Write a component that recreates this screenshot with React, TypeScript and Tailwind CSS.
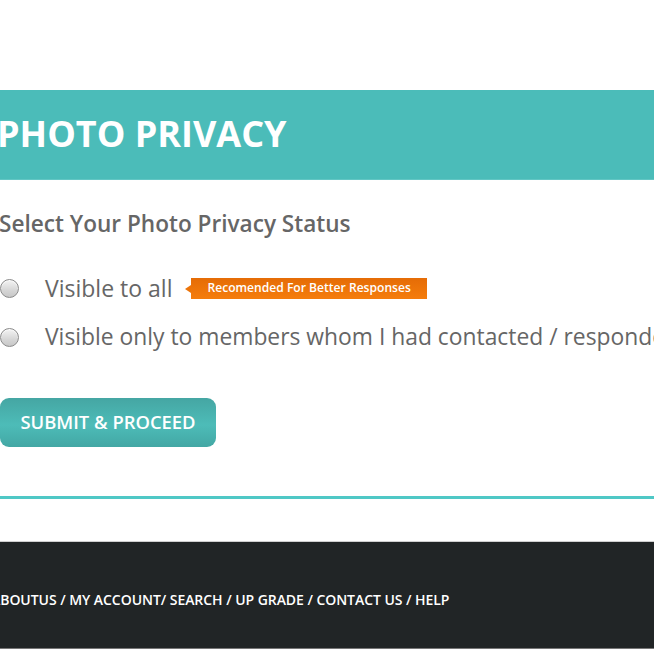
import React from "react";

function Radio() {
  return (
    <span className="inline-block w-[19px] h-[19px] rounded-full border border-[#8a8a8a] bg-[linear-gradient(180deg,#f4f4f4_0%,#d6d6d6_60%,#c8c8c8_100%)] shadow-[inset_0_1px_1px_rgba(255,255,255,0.8)] shrink-0" />
  );
}

export default function App() {
  return (
    <div className="w-[654px] h-[649px] overflow-hidden bg-white font-['Open_Sans',sans-serif]">
      <div className="h-[90px]" />
      <div className="h-[90px] bg-[#4bbcb9] border-b border-[#62c6c4] flex items-center">
        <h1 className="text-[36px] font-bold text-white leading-none ml-[-3px] mt-[-1px]">PHOTO PRIVACY</h1>
      </div>
      <div className="pt-[30px]">
        <h2 className="text-[22.6px] font-semibold text-[#666] leading-[28px] ml-[-1px]">Select Your Photo Privacy Status</h2>
        <div className="mt-[37px] flex items-center h-[26px]">
          <Radio />
          <span className="ml-[26px] text-[23px] text-[#666] leading-none whitespace-nowrap">Visible to all</span>
          <span className="ml-[19px] relative flex items-center h-[21px] px-[16px] bg-[linear-gradient(180deg,#e56c06,#f57d0c)] text-white text-[12.1px] font-semibold leading-none whitespace-nowrap">
            <span className="absolute left-[-6px] top-[7px] w-0 h-0 border-y-[4px] border-y-transparent border-r-[6px] border-r-[#ec7409]" />
            Recomended For Better Responses
          </span>
        </div>
        <div className="mt-[23px] flex items-center h-[26px]">
          <Radio />
          <span className="ml-[26px] text-[22.85px] text-[#666] leading-none whitespace-nowrap">Visible only to members whom I had contacted / responded</span>
        </div>
        <button className="mt-[48px] w-[216px] h-[49px] rounded-[9px] bg-[linear-gradient(180deg,#45a6a3_0%,#4dbcb8_55%,#43a7a4_100%)] text-white text-[18.4px] font-semibold leading-none flex items-center justify-center">
          SUBMIT &amp; PROCEED
        </button>
      </div>
      <div className="mt-[49px] h-[3px] bg-[#4fc8c6]" />
      <div className="h-[42px]" />
      <div className="h-[108px] bg-[#212526] border-t border-[#cfcfcf] border-b border-b-[#777] flex items-center">
        <p className="ml-[-9px] mt-[9px] text-[14px] font-semibold text-white tracking-[-0.05px] whitespace-nowrap">ABOUTUS / MY ACCOUNT/ SEARCH / UP GRADE / CONTACT US / HELP</p>
      </div>
    </div>
  );
}
